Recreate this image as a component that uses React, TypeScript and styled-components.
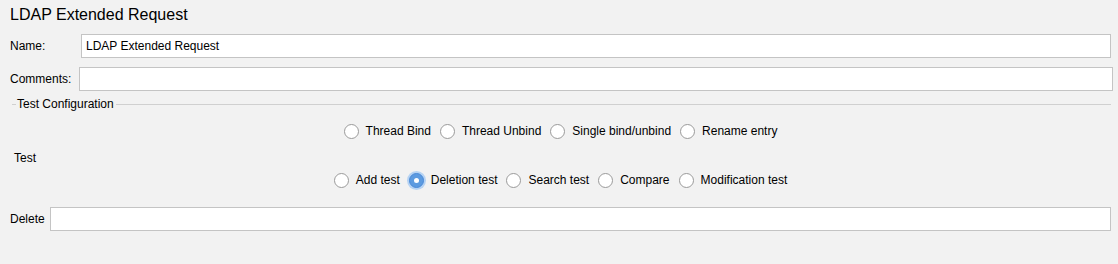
import styled, { createGlobalStyle } from 'styled-components';

const GlobalStyle = createGlobalStyle`
  html, body {
    margin: 0;
    padding: 0;
    background: #f2f2f2;
  }
  body {
    font-family: "Liberation Sans", Arial, sans-serif;
    font-size: 12px;
    color: #000;
  }
`;

const Page = styled.div`
  width: 1118px;
  height: 264px;
  box-sizing: border-box;
  padding: 5px 7px 0 10px;
  display: flex;
  flex-direction: column;
`;

const Title = styled.div`
  font-size: 16px;
  line-height: 20px;
  height: 20px;
`;

const FieldRow = styled.div<{ $top: number; $labelWidth: number; $right?: number }>`
  display: flex;
  align-items: center;
  margin-top: ${(p) => p.$top}px;
  margin-right: ${(p) => p.$right ?? 0}px;
  height: 24px;

  label {
    width: ${(p) => p.$labelWidth}px;
    flex-shrink: 0;
  }
`;

const TextField = styled.input`
  flex: 1;
  height: 24px;
  box-sizing: border-box;
  border: 1px solid #c4c4c4;
  background: #fff;
  padding: 0 4px;
  font: inherit;
  outline: none;
`;

const GroupHeader = styled.div`
  display: flex;
  align-items: center;
  margin: 6px 0 0 2px;
  height: 14px;

  &::before {
    content: '';
    width: 4px;
    height: 1px;
    background: #d0d0d0;
    margin-right: 1px;
  }
  &::after {
    content: '';
    flex: 1;
    height: 1px;
    background: #d0d0d0;
    margin-left: 2px;
  }
`;

const RadioRow = styled.div<{ $top: number }>`
  display: flex;
  justify-content: center;
  align-items: center;
  gap: 9px;
  margin-top: ${(p) => p.$top}px;
  height: 18px;
`;

const RadioItem = styled.label`
  display: flex;
  align-items: center;
  gap: 7px;
`;

const Circle = styled.span<{ $on?: boolean }>`
  width: 15px;
  height: 15px;
  box-sizing: border-box;
  border-radius: 50%;
  background: #fff;
  border: 1px solid ${(p) => (p.$on ? '#4a8ad8' : '#9a9a9a')};
  display: flex;
  align-items: center;
  justify-content: center;
  ${(p) =>
    p.$on &&
    `
    background: #5d9be0;
    box-shadow: 0 0 0 2px #b6d3f3;
    &::after {
      content: '';
      width: 5px;
      height: 5px;
      border-radius: 50%;
      background: #fff;
    }
  `}
`;

const SideLabel = styled.div<{ $top: number }>`
  margin: ${(p) => p.$top}px 0 0 4px;
  height: 14px;
  line-height: 14px;
`;

interface RadioOption {
  label: string;
  checked?: boolean;
}

const bindOptions: RadioOption[] = [
  { label: 'Thread Bind' },
  { label: 'Thread Unbind' },
  { label: 'Single bind/unbind' },
  { label: 'Rename entry' },
];

const testOptions: RadioOption[] = [
  { label: 'Add test' },
  { label: 'Deletion test', checked: true },
  { label: 'Search test' },
  { label: 'Compare' },
  { label: 'Modification test' },
];

function Radios({ options, top }: { options: RadioOption[]; top: number }) {
  return (
    <RadioRow $top={top}>
      {options.map((o) => (
        <RadioItem key={o.label}>
          <Circle $on={o.checked} />
          {o.label}
        </RadioItem>
      ))}
    </RadioRow>
  );
}

export default function App() {
  return (
    <>
      <GlobalStyle />
      <Page>
        <Title>LDAP Extended Request</Title>
        <FieldRow $top={9} $labelWidth={71}>
          <label>Name:</label>
          <TextField defaultValue="LDAP Extended Request" />
        </FieldRow>
        <FieldRow $top={9} $labelWidth={69} $right={-2}>
          <label>Comments:</label>
          <TextField />
        </FieldRow>
        <GroupHeader>Test Configuration</GroupHeader>
        <Radios options={bindOptions} top={11} />
        <SideLabel $top={11}>Test</SideLabel>
        <Radios options={testOptions} top={6} />
        <FieldRow $top={18} $labelWidth={40}>
          <label>Delete</label>
          <TextField />
        </FieldRow>
      </Page>
    </>
  );
}
